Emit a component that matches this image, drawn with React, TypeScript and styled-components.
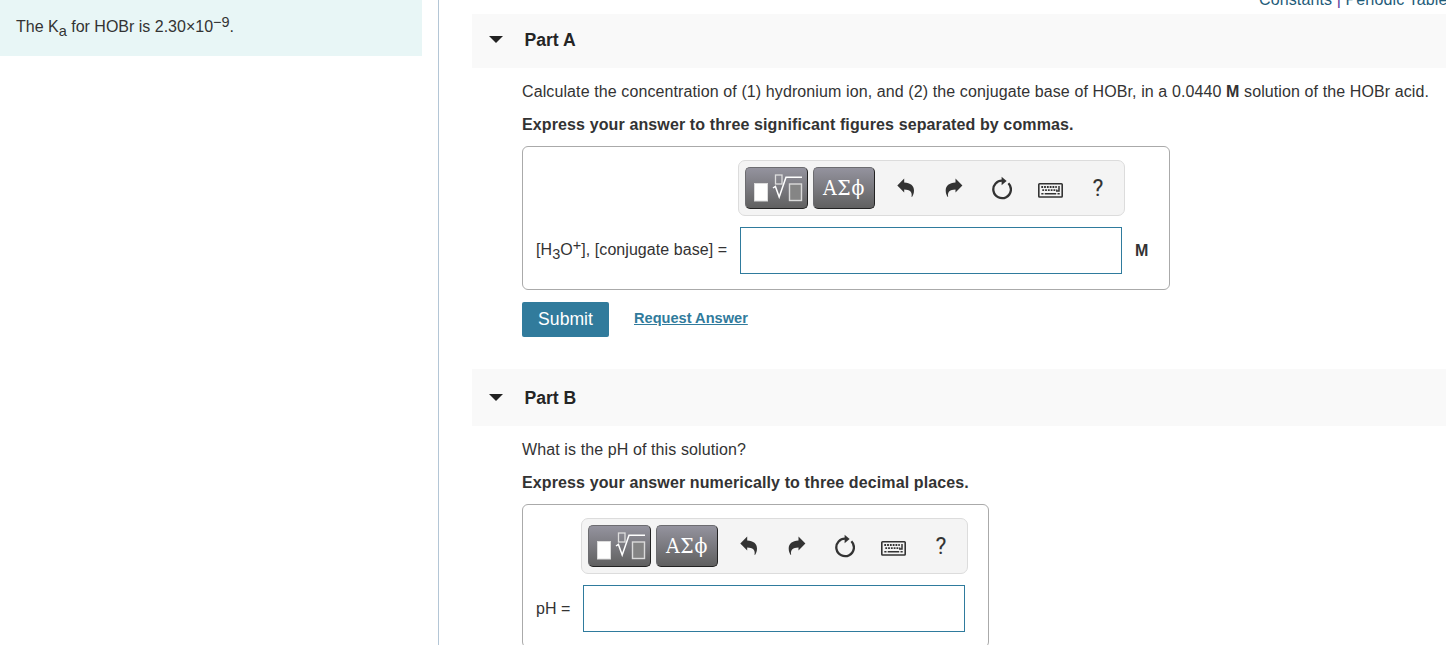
import React from "react";
import styled, { createGlobalStyle } from "styled-components";

const GlobalStyle = createGlobalStyle`
  * {
    box-sizing: border-box;
  }
  body {
    margin: 0;
    overflow: hidden;
    background: #fff;
    color: #333;
    font-family: "Liberation Sans", Arial, sans-serif;
    font-size: 16px;
  }
`;

const SqrtIcon = () => (
  <svg width="61" height="40" viewBox="1 1 61 40" fill="none">
    <rect x="9.5" y="16.5" width="13" height="17.5" fill="#fff" stroke="#dcdcdc" />
    <rect x="30.5" y="8" width="6.5" height="9" stroke="#dedede" strokeWidth="1.3" />
    <path d="M28 21l2.4-1.6L34.2 30 41 10.2h16" stroke="#fff" strokeWidth="1.5" />
    <rect x="44.5" y="17" width="12" height="16.5" fill="#858585" stroke="#dadada" strokeWidth="1.4" />
  </svg>
);

const UndoIcon = () => (
  <svg width="18" height="20" viewBox="0 0 18 20">
    <path
      d="M0.3 7.4L7.2 0.6v4C13.5 4.8 17 8 17 12.6c0 2.4-.6 4.5-1.8 6.2-.4.3-.8.1-.6-.4.7-4.4-1.7-6.7-7.4-6.8v3z"
      fill="#333"
    />
  </svg>
);

const RedoIcon = () => (
  <svg width="18" height="20" viewBox="0 0 18 20">
    <path
      d="M17.4 7.4L10.5 0.6v4C4.2 4.8.7 8 .7 12.6c0 2.4.6 4.5 1.8 6.2.4.3.8.1.6-.4-.7-4.4 1.7-6.7 7.4-6.8v3z"
      fill="#333"
    />
  </svg>
);

const ResetIcon = () => (
  <svg width="20" height="24" viewBox="0 0 20 24">
    <path d="M11 4.6A8.8 8.8 0 1 0 16.4 7.2" fill="none" stroke="#333" strokeWidth="2.3" />
    <path d="M9.6 0.8l5 4.3-5 4.1z" fill="#333" />
  </svg>
);

const KeyboardIcon = () => (
  <svg width="25" height="15" viewBox="0 0 25 15" fill="none">
    <rect x="0.8" y="0.8" width="23.4" height="13.2" rx="0.8" stroke="#333" strokeWidth="1.6" />
    <path d="M3.3 4h15.5M4.3 7.2h15" stroke="#333" strokeWidth="1.8" strokeDasharray="1.8 1" />
    <path d="M21 3.1v4.9h-3M3.3 10.8h2.2M6.7 10.8h11.5M19.5 10.8h2.2" stroke="#333" strokeWidth="1.5" />
  </svg>
);

const Toolbar = () => (
  <ToolbarRoot>
    <PaletteButton $width={63}>
      <SqrtIcon />
    </PaletteButton>
    <PaletteButton $width={62}>ΑΣϕ</PaletteButton>
    <IconGroup>
      <IconButton>
        <UndoIcon />
      </IconButton>
      <IconButton>
        <RedoIcon />
      </IconButton>
      <IconButton>
        <ResetIcon />
      </IconButton>
      <IconButton $drop={5}>
        <KeyboardIcon />
      </IconButton>
      <IconButton>?</IconButton>
    </IconGroup>
  </ToolbarRoot>
);

type AnswerProps = {
  label: React.ReactNode;
  labelWidth: number;
  unit?: string;
};

const Answer = ({ label, labelWidth, unit }: AnswerProps) => (
  <AnswerBox $labelWidth={labelWidth}>
    <span />
    <Toolbar />
    <span />
    <Label $lift={unit ? 2 : 0}>{label}</Label>
    <Field aria-label="answer" />
    {unit ? <Unit>{unit}</Unit> : ""}
  </AnswerBox>
);

const App = () => {
  return (
    <>
      <GlobalStyle />
      <Page>
        <Sidebar>
          <Intro>
            The K<Sub>a</Sub> for HOBr is 2.30×10<Sup>−9</Sup>.
          </Intro>
        </Sidebar>
        <Main>
          <Links>
            <span>Constants</span> <i>|</i> <span>Periodic Table</span>
          </Links>
          <PartHeader $height={54}>
            <Caret />
            <h2>Part A</h2>
          </PartHeader>
          <PartBody>
            <Question>
              Calculate the concentration of (1) hydronium ion, and (2) the
              conjugate base of HOBr, in a 0.0440 <b>M</b> solution of the HOBr
              acid.
            </Question>
            <Instruction>
              Express your answer to three significant figures separated by
              commas.
            </Instruction>
            <Answer
              label={
                <>
                  [H<Sub>3</Sub>O<Sup>+</Sup>], [conjugate base] =
                </>
              }
              labelWidth={202}
              unit="M"
            />
            <Actions>
              <Submit>Submit</Submit>
              <RequestLink>Request Answer</RequestLink>
            </Actions>
          </PartBody>
          <PartHeader $height={57}>
            <Caret />
            <h2>Part B</h2>
          </PartHeader>
          <PartBody>
            <Question>What is the pH of this solution?</Question>
            <Instruction>
              Express your answer numerically to three decimal places.
            </Instruction>
            <Answer label="pH =" labelWidth={45} />
          </PartBody>
        </Main>
      </Page>
    </>
  );
};

export default App;

const Page = styled.div`
  display: flex;
  width: 1446px;
  height: 645px;
  overflow: hidden;
`;

const Sidebar = styled.aside`
  flex: none;
  width: 439px;
  border-right: 1px solid #b4c6d6;
`;

const Intro = styled.div`
  width: 422px;
  height: 56px;
  padding: 17px 16px 0;
  background: #e8f6f6;
  line-height: 20px;
  white-space: nowrap;
`;

const Sub = styled.sub`
  font-size: 14.5px;
  line-height: 0;
  vertical-align: -4px;
`;

const Sup = styled.sup`
  font-size: 14.5px;
  line-height: 0;
  vertical-align: 5px;
`;

const Main = styled.main`
  flex: 1;
  min-width: 0;
  padding-left: 33px;
`;

const Links = styled.div`
  height: 14px;
  padding-left: 787px;
  line-height: 18px;
  letter-spacing: 0.12px;
  margin-top: -9px;
  margin-bottom: 9px;
  white-space: nowrap;
  color: #1f5c7a;

  i {
    font-style: normal;
    color: #5a3a9a;
  }
`;

const PartHeader = styled.div<{ $height: number }>`
  display: flex;
  align-items: flex-end;
  height: ${(p) => p.$height}px;
  padding: 0 0 18px 17px;
  background: #f9f9f9;

  h2 {
    margin: 0 0 0 21.5px;
    font-size: 17.6px;
    line-height: 20px;
    color: #252525;
  }
`;

const Caret = styled.span`
  margin-bottom: 7px;
  border: 7px solid transparent;
  border-top-color: #222;
  border-bottom: 0;
`;

const PartBody = styled.section`
  padding-left: 50px;
`;

const Question = styled.p`
  margin: 0;
  padding-top: 14px;
  line-height: 20px;
  letter-spacing: 0.105px;
  white-space: nowrap;
`;

const Instruction = styled.p`
  margin: 13px 0 11px;
  line-height: 20px;
  letter-spacing: 0.12px;
  font-weight: bold;
  white-space: nowrap;
`;

const AnswerBox = styled.div<{ $labelWidth: number }>`
  display: inline-grid;
  grid-template-columns: ${(p) => p.$labelWidth}px 387px auto;
  row-gap: 11px;
  align-items: center;
  height: 144px;
  padding: 13px 20px 15px 13px;
  border: 1px solid #aaa;
  border-radius: 6px;
  vertical-align: top;
`;

const Label = styled.label<{ $lift: number }>`
  padding-bottom: ${(p) => p.$lift}px;
  line-height: 20px;
  letter-spacing: 0.06px;
  white-space: nowrap;
`;

const Field = styled.input`
  width: 382px;
  height: 47px;
  margin: 0 0 0 2px;
  border: 1px solid #2f7b9d;
  background: #fff;
`;

const Unit = styled.b`
  width: 24px;
  padding-left: 10px;
`;

const ToolbarRoot = styled.div`
  display: flex;
  align-items: center;
  gap: 5px;
  width: 387px;
  height: 56px;
  padding: 0 6px;
  border: 1px solid #dcdcdc;
  border-radius: 7px;
  background: #f4f4f4;
`;

const PaletteButton = styled.button<{ $width: number }>`
  display: flex;
  flex: none;
  align-items: center;
  justify-content: center;
  width: ${(p) => p.$width}px;
  height: 42px;
  padding: 0;
  border: 1px solid #222;
  border-top-color: #6c6c70;
  border-left-color: #6c6c70;
  border-radius: 5px;
  background: linear-gradient(#94939e, #606060);
  color: #fff;
  font: 21px/38px "DejaVu Serif Condensed", "DejaVu Serif", serif;
  letter-spacing: 0.7px;
`;

const IconGroup = styled.div`
  display: flex;
  flex: none;
  margin-left: 2px;
`;

const IconButton = styled.button<{ $drop?: number }>`
  display: flex;
  align-items: center;
  justify-content: center;
  width: 48px;
  height: 42px;
  padding: ${(p) => p.$drop || 0}px 0 0;
  border: 0;
  background: none;
  color: #333;
  font: 23px Roboto, sans-serif;
`;

const Actions = styled.div`
  display: flex;
  align-items: center;
  height: 35px;
  margin: 12px 0 32px;
`;

const Submit = styled.button`
  width: 87px;
  height: 35px;
  padding: 0;
  border: 0;
  border-radius: 2px;
  background: #317b9c;
  color: #fff;
  font: 17.6px "Liberation Sans", Arial, sans-serif;
`;

const RequestLink = styled.a`
  margin: 0 0 4px 25px;
  color: #317b9c;
  font-size: 14.6px;
  font-weight: bold;
  text-decoration: underline;
`;
